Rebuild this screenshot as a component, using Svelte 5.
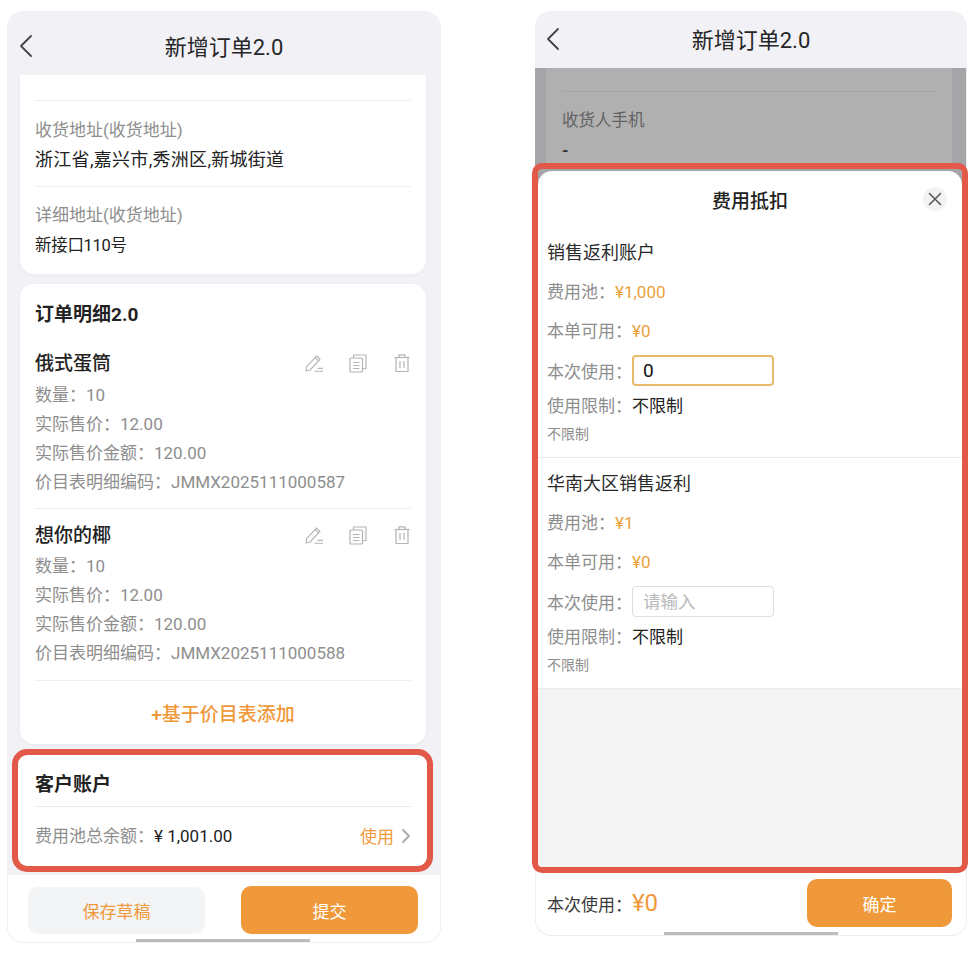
<script>
    const items = [
        { name: "俄式蛋筒", qty: "10", price: "12.00", total: "120.00", code: "JMMX2025111000587" },
        { name: "想你的椰", qty: "10", price: "12.00", total: "120.00", code: "JMMX2025111000588" }
    ];
    const accounts = [
        { name: "销售返利账户", pool: "¥1,000", usable: "¥0", value: "0" },
        { name: "华南大区销售返利", pool: "¥1", usable: "¥0", value: "" }
    ];
</script>

<main class="page">
    <!-- Order form -->
    <section class="phone left">
        <header class="nav tall">
            <svg class="back" viewBox="0 0 14 24" width="14" height="24"><path d="M12 2 L2 12 L12 22" fill="none" stroke="#444" stroke-width="1.8" stroke-linecap="round" stroke-linejoin="round"/></svg>
            <h1>新增订单2.0</h1>
        </header>

        <div class="content">
            <div class="card address">
                <div class="field">
                    <div class="label">收货地址(收货地址)</div>
                    <div class="value">浙江省,嘉兴市,秀洲区,新城街道</div>
                </div>
                <div class="field last">
                    <div class="label">详细地址(收货地址)</div>
                    <div class="value small">新接口110号</div>
                </div>
            </div>

            <div class="card details">
                <h2>订单明细2.0</h2>
                {#each items as item, i}
                    <div class="item" class:first={i === 0}>
                        <div class="item-top">
                            <span class="item-name">{item.name}</span>
                            <div class="tools">
                                <svg viewBox="0 0 20 20" width="20" height="20" fill="none" stroke="#b4b4b4" stroke-width="1.1" stroke-linejoin="round"><path d="M2 18 L2.6 13.6 L12.6 3 L16 6.4 L6 17 Z"/><path d="M11.2 4.6 L14.6 8"/><path d="M10.5 18.2 H19 M13.5 15.4 H19"/></svg>
                                <svg viewBox="0 0 20 20" width="20" height="20" fill="none" stroke="#b4b4b4" stroke-width="1.2" stroke-linejoin="round"><rect x="2" y="5" width="12.5" height="14" rx="1"/><path d="M5.5 5 V2 H18 V15.5 H14.5"/><path d="M5 9.5 H11.5 M5 12.5 H11.5 M5 15.5 H11.5"/></svg>
                                <svg viewBox="0 0 20 20" width="20" height="20" fill="none" stroke="#b4b4b4" stroke-width="1.2" stroke-linejoin="round"><path d="M2.5 4.5 H17.5"/><path d="M7 4.5 V1.8 H13 V4.5"/><path d="M4 4.5 V18.5 H16 V4.5"/><path d="M8 8 V15 M12 8 V15"/></svg>
                            </div>
                        </div>
                        <div class="row">数量：<span class="num">{item.qty}</span></div>
                        <div class="row">实际售价：<span class="num">{item.price}</span></div>
                        <div class="row">实际售价金额：<span class="num">{item.total}</span></div>
                        <div class="row">价目表明细编码：<span class="num">{item.code}</span></div>
                    </div>
                {/each}
                <div class="add">+基于价目表添加</div>
            </div>

            <div class="card account marked">
                <h2>客户账户</h2>
                <div class="balance">
                    <span class="row">费用池总余额：<span class="dark">¥ 1,001.00</span></span>
                    <span class="use">
                        使用
                        <svg viewBox="0 0 10 16" width="10" height="16"><path d="M2 2 L8 8 L2 14" fill="none" stroke="#a9a9a9" stroke-width="1.8" stroke-linecap="round" stroke-linejoin="round"/></svg>
                    </span>
                </div>
            </div>
        </div>

        <footer class="actions">
            <button class="btn draft">保存草稿</button>
            <button class="btn submit">提交</button>
        </footer>
        <div class="home"></div>
    </section>

    <!-- Deduction sheet -->
    <section class="phone right">
        <header class="nav">
            <svg class="back" viewBox="0 0 14 24" width="14" height="24"><path d="M12 2 L2 12 L12 22" fill="none" stroke="#444" stroke-width="1.8" stroke-linecap="round" stroke-linejoin="round"/></svg>
            <h1>新增订单2.0</h1>
        </header>

        <div class="dim">
            <div class="dim-card">
                <div class="dim-label">收货人手机</div>
                <div class="dim-value">-</div>
            </div>
        </div>

        <div class="sheet">
            <div class="sheet-body">
                <div class="sheet-head">
                    <span>费用抵扣</span>
                    <span class="close">
                        <svg viewBox="0 0 14 14" width="14" height="14"><path d="M1.5 1.5 L12.5 12.5 M12.5 1.5 L1.5 12.5" stroke="#555" stroke-width="1.5" stroke-linecap="round"/></svg>
                    </span>
                </div>
                {#each accounts as acc, i}
                    <div class="acc" class:first={i === 0}>
                        <div class="acc-name">{acc.name}</div>
                        <div class="acc-row pool">费用池：<span class="money">{acc.pool}</span></div>
                        <div class="acc-row usable">本单可用：<span class="money">{acc.usable}</span></div>
                        <div class="acc-input">
                            本次使用：<input class:active={acc.value !== ""} value={acc.value} placeholder="请输入" />
                        </div>
                        <div class="acc-row limit">使用限制：<span class="dark">不限制</span></div>
                        <div class="acc-note">不限制</div>
                    </div>
                {/each}
                <div class="sheet-rest"></div>
            </div>
        </div>

        <footer class="confirm">
            <span class="total">本次使用：<span class="total-num">¥0</span></span>
            <button class="btn ok">确定</button>
        </footer>
        <div class="home"></div>
    </section>
</main>

<style>
    :global(body) {
        margin: 0;
        background: #fff;
    }
    .page {
        display: flex;
        align-items: flex-start;
        gap: 94px;
        padding: 11px 0 0 7px;
        font-family: Roboto, "Noto Sans CJK SC", sans-serif;
        font-size: 17px;
        color: #222;
    }
    .phone {
        position: relative;
        display: flex;
        flex-direction: column;
        box-sizing: border-box;
        width: 434px;
        border: 1px solid #eeeeee;
        border-top: none;
        border-radius: 16px;
        overflow: hidden;
        background: #fff;
    }
    .left {
        height: 932px;
    }
    .right {
        width: 432px;
        height: 925px;
        overflow: visible;
    }
    .nav {
        flex: none;
        display: flex;
        align-items: center;
        justify-content: center;
        position: relative;
        height: 57px;
        margin: 0 -1px;
        padding-bottom: 3px;
        box-sizing: border-box;
        background: #f1f1f6;
        border-radius: 16px 16px 0 0;
    }
    .nav.tall {
        height: 64px;
        padding: 4px 0 0;
    }
    .nav h1 {
        margin: 0;
        font-size: 22px;
        font-weight: 400;
        color: #262626;
    }
    .back {
        position: absolute;
        left: 11px;
        top: 50%;
        margin-top: -13px;
    }
    .nav.tall .back {
        left: 12px;
        margin-top: -9px;
    }

    .content {
        flex: 1;
        min-height: 0;
        display: flex;
        flex-direction: column;
        gap: 10px;
        padding: 0 14px 0 12px;
        background: #f1f1f6;
    }
    .card {
        padding: 0 15px;
        background: #fff;
        border-radius: 14px;
        box-shadow: 0 1px 4px rgba(0, 0, 0, 0.04);
    }
    .address {
        padding-top: 25px;
        border-radius: 0 0 14px 14px;
    }
    .field {
        padding: 17px 0 14px;
        border-top: 1px solid #efefef;
        line-height: 24px;
    }
    .field.last {
        padding: 16px 0 17px;
    }
    .label {
        color: #8e8e8e;
    }
    .value {
        margin-top: 6px;
        font-size: 18px;
        letter-spacing: 0.3px;
        color: #222;
    }
    .value.small {
        margin-top: 7px;
        margin-bottom: -1px;
        font-size: 16.5px;
        letter-spacing: -0.3px;
    }
    .details {
        padding-top: 19px;
    }
    h2 {
        margin: 0;
        font-size: 19px;
        font-weight: 700;
        line-height: 24px;
        color: #222;
    }
    .details h2 {
        margin-bottom: 10px;
    }
    .item {
        padding: 14px 0 12px;
        border-bottom: 1px solid #efefef;
    }
    .item.first {
        padding-bottom: 11px;
    }
    .item-top {
        display: flex;
        align-items: center;
        justify-content: space-between;
        height: 24px;
        margin-bottom: 5px;
    }
    .item.first .item-top {
        margin-bottom: 6px;
    }
    .item-name {
        padding-bottom: 3px;
        font-size: 19px;
        font-weight: 500;
    }
    .tools {
        display: flex;
        gap: 24px;
        margin-right: -1px;
    }
    .row {
        line-height: 29px;
        color: #8e8e8e;
    }
    .add {
        height: 63px;
        padding-top: 5px;
        box-sizing: border-box;
        line-height: 58px;
        text-align: center;
        font-size: 19px;
        font-weight: 500;
        color: #f0993a;
    }
    .account {
        height: 111px;
        margin: 1px -1px 0 -2px;
        padding: 18px 16px 0 17px;
        box-sizing: border-box;
    }
    .marked {
        outline: 6px solid #e2594a;
        border-radius: 9px;
    }
    .account h2 {
        padding-bottom: 9px;
        border-bottom: 1px solid #e9e9e9;
    }
    .balance {
        display: flex;
        align-items: center;
        justify-content: space-between;
        margin-top: 15px;
    }
    .dark {
        color: #222;
    }
    .use {
        display: flex;
        align-items: center;
        gap: 7px;
        margin-top: -2px;
        color: #f0993a;
    }
    .actions {
        flex: none;
        display: flex;
        justify-content: space-between;
        height: 67px;
        padding: 11px 22px 0 20px;
        box-sizing: border-box;
        background: #fff;
    }
    .btn {
        border: none;
        border-radius: 10px;
        font: inherit;
    }
    .draft {
        width: 177px;
        height: 47px;
        margin-top: 1px;
        background: #f2f4f5;
        color: #f0993a;
    }
    .submit {
        width: 177px;
        height: 48px;
        background: #f0993a;
        color: #fff;
    }
    .home {
        position: absolute;
        left: 128px;
        bottom: 0;
        width: 174px;
        height: 3px;
        background: #b9bdbd;
    }

    .dim {
        flex: none;
        height: 103px;
        padding: 0 14px 0 11px;
        margin-left: -1px;
        background: #a5a5a8;
    }
    .dim-card {
        height: 100%;
        padding: 23px 16px 0;
        box-sizing: border-box;
        background: #b0b0b0;
        font-size: 16.5px;
    }
    .dim-label {
        padding-top: 17px;
        border-top: 1px solid #a5a5a5;
        line-height: 24px;
        color: #636363;
    }
    .dim-value {
        margin-top: 6px;
        line-height: 24px;
        font-weight: 700;
        color: #333;
    }
    .sheet {
        flex: 1;
        min-height: 0;
        display: flex;
        margin: -2px 4px 0 2px;
        padding-top: 2px;
        background: #a5a5a8;
        border-radius: 4px;
        outline: 6px solid #e2594a;
        position: relative;
    }
    .sheet-body {
        flex: 1;
        display: flex;
        flex-direction: column;
        background: #fff;
        border-radius: 14px 14px 4px 4px;
        overflow: hidden;
    }
    .sheet-head {
        flex: none;
        position: relative;
        display: flex;
        align-items: center;
        justify-content: center;
        height: 59px;
        padding-bottom: 3px;
        box-sizing: border-box;
        font-size: 19px;
        font-weight: 500;
    }
    .close {
        position: absolute;
        right: 15px;
        top: 16px;
        display: flex;
        align-items: center;
        justify-content: center;
        width: 24px;
        height: 24px;
        border-radius: 50%;
        background: #f3f3f3;
    }
    .acc {
        flex: none;
        padding: 14px 9px 13px;
        border-bottom: 1px solid #ececec;
        color: #8e8e8e;
    }
    .acc.first {
        padding-top: 11px;
    }
    .acc-name {
        font-size: 18px;
        font-weight: 400;
        line-height: 24px;
        color: #2a2a2a;
    }
    .acc-row {
        line-height: 24px;
    }
    .pool {
        margin-top: 15px;
    }
    .usable {
        margin-top: 15px;
    }
    .limit {
        margin-top: 8px;
    }
    .money {
        color: #e9a23b;
    }
    .acc-input {
        display: flex;
        align-items: center;
        height: 31px;
        margin-top: 12px;
    }
    input {
        width: 142px;
        height: 31px;
        padding: 0 10px;
        box-sizing: border-box;
        border: 1px solid #dedede;
        border-radius: 4px;
        font: inherit;
        font-size: 17.5px;
        color: #111;
        background: #fff;
    }
    input.active {
        border: 2px solid #e8bb6a;
        padding: 0 9px;
        font-size: 19px;
    }
    input::placeholder {
        color: #b9b9b9;
    }
    .acc-note {
        margin-top: 6px;
        font-size: 14px;
        line-height: 20px;
    }
    .sheet-rest {
        flex: 1;
        background: #f4f4f4;
    }
    .confirm {
        flex: none;
        display: flex;
        align-items: flex-start;
        justify-content: space-between;
        height: 68px;
        padding: 12px 14px 0 11px;
        box-sizing: border-box;
    }
    .total {
        display: flex;
        align-items: center;
        height: 48px;
        color: #3a3a3a;
    }
    .total-num {
        font-size: 24px;
        font-weight: 400;
        color: #f0993a;
    }
    .ok {
        width: 145px;
        height: 48px;
        background: #f0993a;
        color: #fff;
    }
</style>
